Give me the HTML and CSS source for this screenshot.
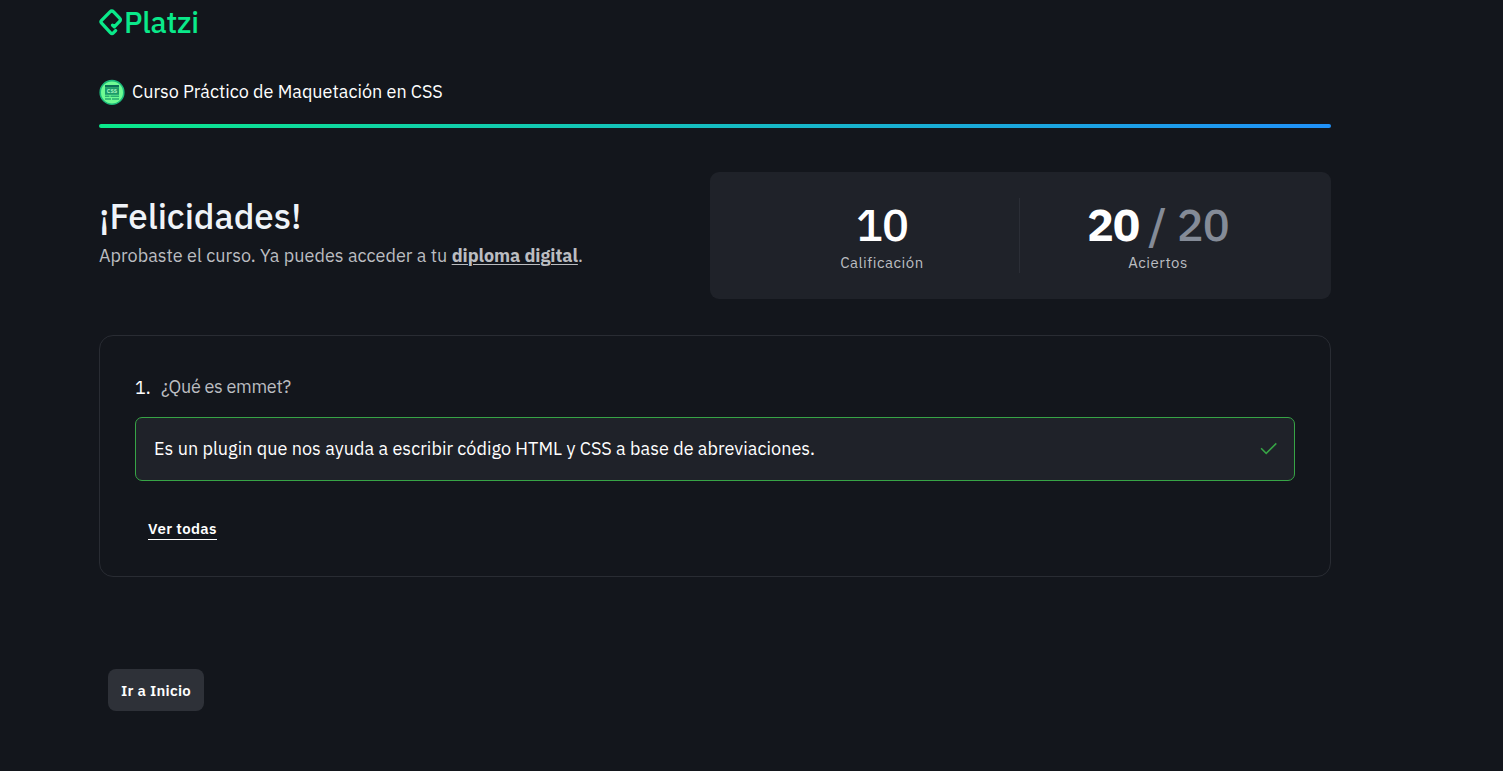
FILE: index.html
```
<!DOCTYPE html>
<html lang="es">
<head>
<meta charset="utf-8">
<title>Platzi</title>
<link rel="stylesheet" href="styles.css">
</head>
<body>
<main class="page">
  <header class="brand">
    <svg class="brand-mark" width="24" height="28" viewBox="0 0 24 28" fill="none" stroke="#0ae98a" stroke-width="3.3" stroke-linejoin="round" stroke-linecap="round"><path d="M13.6 17.2L15.3 18.8L20.6 13.4Q22.2 11.8 20.6 10.2L14.6 3.8Q12.8 2 11 3.8L2.6 12.4Q1.3 13.8 2.6 15.2L11.6 24.8Q13 26.2 14.4 24.8L16.6 22.6"/></svg>
    <span class="brand-name">Platzi</span>
  </header>
  <div class="course">
    <svg width="26" height="26" viewBox="0 0 26 26"><circle cx="13" cy="13.4" r="11.8" fill="#6ffb93" stroke="#1cb97b" stroke-width="1.6"/><path fill="#0c6f58" d="M6 6h14v2.6H6z"/><path fill="#1c9a69" d="M6 8.6h14v7.2H6z"/><path fill="#2aac72" d="M6 16.6h4.5v1.5H6zm5.5 0H20v1.5h-8.5zM6 19.2h6v1.5H6zm7 0h7v1.5h-7z"/><text class="badge-text" x="13" y="14.2">CSS</text></svg>
    <h2 class="course-name">Curso Práctico de Maquetación en CSS</h2>
  </div>
  <div class="progress"></div>
  <section class="summary">
    <div class="message">
      <h1 class="title">¡Felicidades!</h1>
      <p class="subtitle">Aprobaste el curso. Ya puedes acceder a tu <a class="diploma">diploma digital</a>.</p>
    </div>
    <div class="scores">
      <div class="score first"><div class="num">10</div><div class="label">Calificación</div></div>
      <div class="score second"><div class="num"><b>20</b><span class="total"><span class="slash">/</span>20</span></div><div class="label">Aciertos</div></div>
    </div>
  </section>
  <section class="answers">
    <div class="question"><span class="index">1.</span><span class="question-text">¿Qué es emmet?</span></div>
    <div class="answer"><span class="answer-text">Es un plugin que nos ayuda a escribir código HTML y CSS a base de abreviaciones.</span>
      <svg width="18" height="14" viewBox="0 0 18 14" fill="none" stroke="#37a446" stroke-width="1.5"><path d="M2.1 6.3L7.2 11.4L17.3 1.4"/></svg>
    </div>
    <a class="all">Ver todas</a>
  </section>
  <a class="home">Ir a Inicio</a>
</main>
</body>
</html>
```
FILE: styles.css
```
* { box-sizing: border-box; }
body { margin: 0; height: 771px; background: #13161c; color: #fff; font-family: "IBM Plex Sans", "Noto Sans", sans-serif; overflow: hidden; }
h1, h2, p { margin: 0; }
.page { width: 1232px; margin-left: 99px; padding-top: 8px; }
.brand { display: flex; align-items: center; height: 28px; color: #0ae98a; }
.brand-mark { flex: none; }
.brand-name { margin-left: 1px; font-size: 29.5px; font-weight: 500; line-height: 28px; letter-spacing: -0.2px; }
.course { display: flex; align-items: center; height: 26px; margin-top: 43px; }
.course-name { margin-left: 7px; font-size: 18px; font-weight: 400; line-height: 26px; white-space: nowrap; }
.badge-text { font-size: 5.5px; font-weight: 700; fill: #a5f5c0; text-anchor: middle; }
.progress { height: 4px; margin-top: 19px; border-radius: 2px; background: linear-gradient(90deg, #0ae98a, #2091f9); }
.summary { display: flex; justify-content: space-between; height: 127px; margin-top: 44px; }
.message { padding-top: 20px; }
.title { font-size: 35px; font-weight: 500; line-height: 48px; letter-spacing: -.05px; color: #eff3f8; }
.subtitle { font-size: 18px; line-height: 32px; letter-spacing: .04px; color: #bbbdc1; white-space: nowrap; }
.diploma { font-weight: 700; letter-spacing: -.05px; text-decoration: underline; text-decoration-thickness: 1px; text-underline-offset: 2px; }
.scores { display: flex; width: 621px; padding: 26px 0; border-radius: 9px; background: #1f2229; }
.score { height: 75px; text-align: center; }
.first { width: 310px; padding-left: 35px; border-right: 1px solid #2b2e36; }
.second { width: 276px; }
.num { height: 55px; font-size: 45px; font-weight: 500; line-height: 52px; letter-spacing: -1px; white-space: nowrap; }
.num b { font-weight: 700; }
.total { font-weight: 500; color: #848b97; }
.slash { margin: 0 11px 0 9px; }
.label { font-size: 15px; line-height: 20px; letter-spacing: .5px; color: #bbbdc1; }
.answers { height: 242px; margin-top: 36px; padding: 35px; border: 1px solid #292c33; border-radius: 14px; }
.question { display: flex; align-items: center; height: 31px; font-size: 18px; color: #bbbdc1; }
.index { width: 26px; padding-top: 2px; color: #fff; }
.question-text { letter-spacing: -.3px; }
.answer { display: flex; align-items: center; justify-content: space-between; height: 64px; margin-top: 15px; padding: 0 17px 0 18px; border: 1px solid #37a446; border-radius: 7px; background: #1f2229; font-size: 18px; }
.answer-text { padding-bottom: 1px; letter-spacing: .04px; }
.all { display: inline-block; height: 21px; margin: 38px 0 0 13px; border-bottom: 1px solid #fff; font-size: 15px; font-weight: 600; line-height: 20px; letter-spacing: .35px; }
.home { display: flex; align-items: center; justify-content: center; width: 96px; height: 42px; margin: 92px 0 0 9px; border-radius: 8px; background: #2e3138; font-size: 15px; font-weight: 600; letter-spacing: .25px; }
```
